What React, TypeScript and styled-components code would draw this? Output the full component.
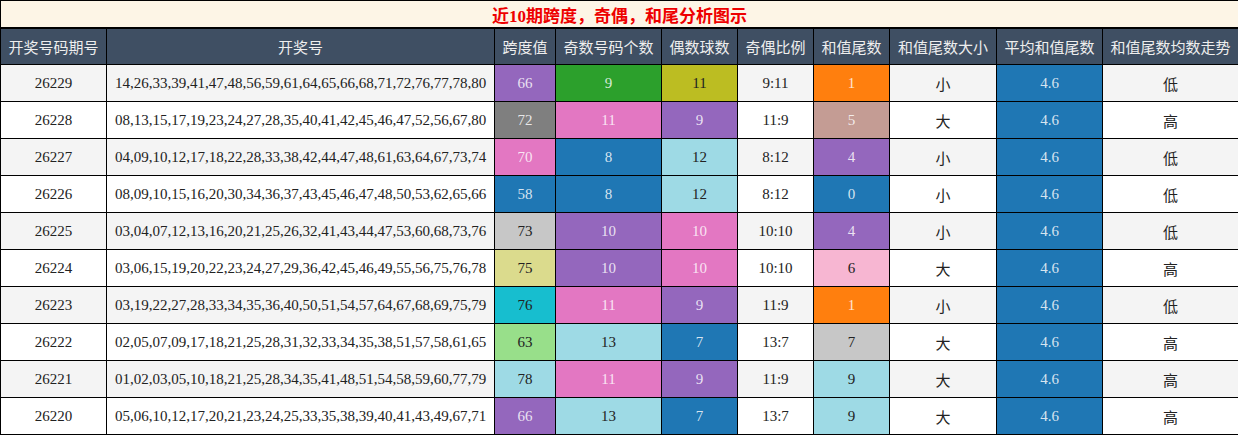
import React from "react";
import styled, { createGlobalStyle } from "styled-components";

const GlobalStyle = createGlobalStyle`
  html, body { margin: 0; padding: 0; background: #ffffff; }
  body { font-family: "Liberation Serif", "Noto Sans CJK SC", serif; }
`;

const Table = styled.table`
  width: 1238px;
  table-layout: fixed;
  border-collapse: collapse;
  font-family: "Liberation Serif", "Noto Sans CJK SC", serif;
  font-size: 15px;
  color: #222;
`;

const TitleCell = styled.th`
  height: 26px;
  padding: 0;
  background: #fdf5e6;
  border: 1px solid #000;
  border-bottom: 2px solid #000;
  color: #ee0000;
  font-family: "Liberation Serif", "Noto Sans CJK SC", serif;
  font-weight: bold;
  font-size: 17px;
  text-align: center;
  vertical-align: middle;
`;

const HeadCell = styled.th`
  height: 35px;
  padding: 0;
  background: #3f4f63;
  border: 1px solid #000;
  color: #eeeeee;
  font-family: "Noto Sans CJK SC", sans-serif;
  font-weight: normal;
  font-size: 15px;
  text-align: center;
  vertical-align: middle;
  white-space: nowrap;
`;

const Row = styled.tr<{ $striped: boolean }>`
  background: ${(p) => (p.$striped ? "#f4f4f4" : "#ffffff")};
`;

const Cell = styled.td<{ $bg?: string; $light?: boolean; $cjk?: boolean }>`
  height: 36px;
  padding: 0;
  border: 1px solid #000;
  text-align: center;
  vertical-align: middle;
  white-space: nowrap;
  overflow: hidden;
  background: ${(p) => p.$bg || "transparent"};
  color: ${(p) => (p.$light ? "rgba(255,255,255,0.82)" : "#222")};
  font-family: ${(p) =>
    p.$cjk ? '"Noto Sans CJK SC", sans-serif' : '"Liberation Serif", "Noto Sans CJK SC", serif'};
  font-size: 15px;
`;

const C = {
  blue: "#1f77b4",
  orange: "#ff7f0e",
  green: "#2ca02c",
  purple: "#9467bd",
  brown: "#c49c94",
  pink: "#e377c2",
  gray: "#7f7f7f",
  lgray: "#c7c7c7",
  olive: "#bcbd22",
  lolive: "#dbdb8d",
  cyan: "#17becf",
  lcyan: "#9edae5",
  lgreen: "#98df8a",
  lpink: "#f7b6d2",
};

const LIGHT_TEXT = new Set([C.blue, C.orange, C.green, C.purple, C.brown, C.pink, C.gray]);

type V = [string | number, string];

interface RowData {
  id: string;
  nums: string;
  span: V;
  odd: V;
  even: V;
  ratio: string;
  tail: V;
  size: string;
  trend: string;
}

const rows: RowData[] = [
  { id: "26229", nums: "14,26,33,39,41,47,48,56,59,61,64,65,66,68,71,72,76,77,78,80", span: [66, C.purple], odd: [9, C.green], even: [11, C.olive], ratio: "9:11", tail: [1, C.orange], size: "小", trend: "低" },
  { id: "26228", nums: "08,13,15,17,19,23,24,27,28,35,40,41,42,45,46,47,52,56,67,80", span: [72, C.gray], odd: [11, C.pink], even: [9, C.purple], ratio: "11:9", tail: [5, C.brown], size: "大", trend: "高" },
  { id: "26227", nums: "04,09,10,12,17,18,22,28,33,38,42,44,47,48,61,63,64,67,73,74", span: [70, C.pink], odd: [8, C.blue], even: [12, C.lcyan], ratio: "8:12", tail: [4, C.purple], size: "小", trend: "低" },
  { id: "26226", nums: "08,09,10,15,16,20,30,34,36,37,43,45,46,47,48,50,53,62,65,66", span: [58, C.blue], odd: [8, C.blue], even: [12, C.lcyan], ratio: "8:12", tail: [0, C.blue], size: "小", trend: "低" },
  { id: "26225", nums: "03,04,07,12,13,16,20,21,25,26,32,41,43,44,47,53,60,68,73,76", span: [73, C.lgray], odd: [10, C.purple], even: [10, C.pink], ratio: "10:10", tail: [4, C.purple], size: "小", trend: "低" },
  { id: "26224", nums: "03,06,15,19,20,22,23,24,27,29,36,42,45,46,49,55,56,75,76,78", span: [75, C.lolive], odd: [10, C.purple], even: [10, C.pink], ratio: "10:10", tail: [6, C.lpink], size: "大", trend: "高" },
  { id: "26223", nums: "03,19,22,27,28,33,34,35,36,40,50,51,54,57,64,67,68,69,75,79", span: [76, C.cyan], odd: [11, C.pink], even: [9, C.purple], ratio: "11:9", tail: [1, C.orange], size: "小", trend: "低" },
  { id: "26222", nums: "02,05,07,09,17,18,21,25,28,31,32,33,34,35,38,51,57,58,61,65", span: [63, C.lgreen], odd: [13, C.lcyan], even: [7, C.blue], ratio: "13:7", tail: [7, C.lgray], size: "大", trend: "高" },
  { id: "26221", nums: "01,02,03,05,10,18,21,25,28,34,35,41,48,51,54,58,59,60,77,79", span: [78, C.lcyan], odd: [11, C.pink], even: [9, C.purple], ratio: "11:9", tail: [9, C.lcyan], size: "大", trend: "高" },
  { id: "26220", nums: "05,06,10,12,17,20,21,23,24,25,33,35,38,39,40,41,43,49,67,71", span: [66, C.purple], odd: [13, C.lcyan], even: [7, C.blue], ratio: "13:7", tail: [9, C.lcyan], size: "大", trend: "高" },
];

const widths = [106, 388, 61, 106, 76, 76, 76, 107, 106, 136];
const headers = [
  "开奖号码期号",
  "开奖号",
  "跨度值",
  "奇数号码个数",
  "偶数球数",
  "奇偶比例",
  "和值尾数",
  "和值尾数大小",
  "平均和值尾数",
  "和值尾数均数走势",
];

const ColorCell: React.FC<{ v: V }> = ({ v }) => (
  <Cell $bg={v[1]} $light={LIGHT_TEXT.has(v[1])}>
    {v[0]}
  </Cell>
);

export default function App() {
  return (
    <>
      <GlobalStyle />
      <Table>
        <colgroup>
          {widths.map((w, i) => (
            <col key={i} style={{ width: w }} />
          ))}
        </colgroup>
        <thead>
          <tr>
            <TitleCell colSpan={10}>近10期跨度，奇偶，和尾分析图示</TitleCell>
          </tr>
          <tr>
            {headers.map((h) => (
              <HeadCell key={h}>{h}</HeadCell>
            ))}
          </tr>
        </thead>
        <tbody>
          {rows.map((r, i) => (
            <Row key={r.id} $striped={i % 2 === 0}>
              <Cell>{r.id}</Cell>
              <Cell>{r.nums}</Cell>
              <ColorCell v={r.span} />
              <ColorCell v={r.odd} />
              <ColorCell v={r.even} />
              <Cell>{r.ratio}</Cell>
              <ColorCell v={r.tail} />
              <Cell $cjk>{r.size}</Cell>
              <ColorCell v={[4.6, C.blue]} />
              <Cell $cjk>{r.trend}</Cell>
            </Row>
          ))}
        </tbody>
      </Table>
    </>
  );
}
